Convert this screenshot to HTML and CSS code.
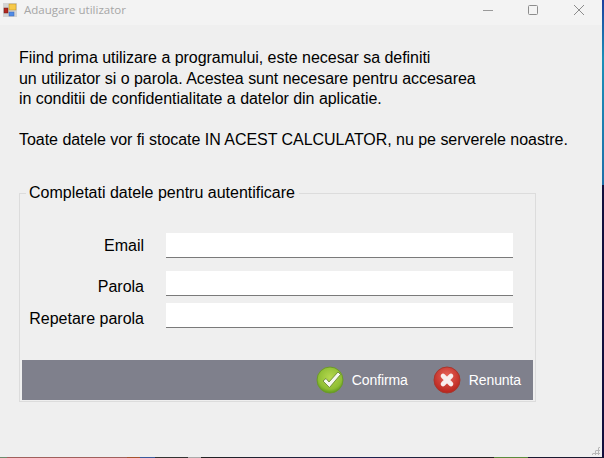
FILE: index.html
```html
<!DOCTYPE html>
<html lang="ro">
<head>
  <meta charset="UTF-8" />
  <title>Adaugare utilizator</title>
  <link rel="stylesheet" href="styles.css">
</head>
<body>
  <div class="window">
    <div class="title-bar">
      <svg class="app-icon" width="14" height="14" viewBox="0 0 14 14">
        <rect x="0" y="0" width="14" height="14" fill="#d4d4d4"/>
        <rect x="1" y="5" width="4" height="5" fill="#b3261e" stroke="#6b1a14" stroke-width="0.5"/>
        <rect x="6" y="1" width="7" height="6" fill="#f7c948" stroke="#b98c25" stroke-width="0.5"/>
        <rect x="6" y="9" width="5" height="4" fill="#4f8be8" stroke="#3c66ad" stroke-width="0.5"/>
      </svg>
      <span class="title-text">Adaugare utilizator</span>
      <div class="window-buttons">
        <svg width="10" height="10" viewBox="0 0 10 10"><path d="M0 5.5H10" stroke="#9a9a9a" fill="none"/></svg>
        <svg class="max-btn" width="10" height="10" viewBox="0 0 10 10"><rect x="0.5" y="0.5" width="9" height="9" rx="1" stroke="#8c8c8c" fill="none"/></svg>
        <svg width="10" height="10" viewBox="0 0 10 10"><path d="M0 0L10 10M10 0L0 10" stroke="#8c8c8c" fill="none"/></svg>
      </div>
    </div>

    <div class="content">
      <p class="intro">Fiind prima utilizare a programului, este necesar sa definiti<br />
        un utilizator si o parola. Acestea sunt necesare pentru accesarea<br />
        in conditii de confidentialitate a datelor din aplicatie.</p>
      <p class="intro note">Toate datele vor fi stocate IN ACEST CALCULATOR, nu pe serverele noastre.</p>

      <div class="login-box">
        <div class="box-title">Completati datele pentru autentificare</div>
        <div class="form-rows">
          <div class="form-row first">
            <label for="email">Email</label>
            <input type="text" id="email" />
          </div>
          <div class="form-row second">
            <label for="parola">Parola</label>
            <input type="password" id="parola" />
          </div>
          <div class="form-row third">
            <label for="repetare">Repetare parola</label>
            <input type="password" id="repetare" />
          </div>
        </div>
        <div class="button-bar">
          <button type="button" class="action confirm">
            <svg width="28" height="28" viewBox="0 0 28 28">
              <defs>
                <radialGradient id="greenBall" cx="50%" cy="40%" r="60%">
                  <stop offset="0" stop-color="#b5d84e"/>
                  <stop offset="0.75" stop-color="#8fbe34"/>
                  <stop offset="1" stop-color="#5f9a1c"/>
                </radialGradient>
              </defs>
              <circle cx="14" cy="14" r="13" fill="url(#greenBall)" stroke="#6c9a2a"/>
              <path d="M7 15L10 12.5L13 16L22 6L24.5 8.5L13.5 21.5Z" fill="#f6f8f0" stroke="#5f7f2c" stroke-width="0.8" stroke-linejoin="round"/>
            </svg>
            Confirma
          </button>
          <button type="button" class="action">
            <svg width="28" height="28" viewBox="0 0 28 28">
              <defs>
                <radialGradient id="redBall" cx="50%" cy="35%" r="65%">
                  <stop offset="0" stop-color="#e8645a"/>
                  <stop offset="1" stop-color="#b8231c"/>
                </radialGradient>
              </defs>
              <circle cx="14" cy="14" r="13" fill="url(#redBall)" stroke="#a8362c"/>
              <path d="M10 10L18 18M18 10L10 18" stroke="#f8eeee" stroke-width="4.6" stroke-linecap="round"/>
            </svg>
            Renunta
          </button>
        </div>
      </div>
    </div>
    <div class="grip"></div>
  </div>
</body>
</html>
```

FILE: styles.css
```css
html, body {
  height: 100%;
}

body {
  margin: 0;
  overflow: hidden;
  background:
    linear-gradient(#1c3f9e, #1a8fb8 30%, #1f6fa8 95%, #120f3d 95%) right top / 2px 195px no-repeat,
    linear-gradient(90deg, #6f8a6c 7px, #a0605c 7px, #a0605c 127px, #a5532f 127px, #a5532f 140px, #3a5a9a 140px, #3a5a9a 155px, #333 155px, #333 188px, #aaa 188px, #aaa 201px, #222 201px, #1c2250 370px, #222 480px, #222 494px, #5a8a3c 494px, #5a8a3c 528px, #1a1a30 528px) left bottom / 100% 1px no-repeat,
    #120f3d;
  font-family: "Liberation Sans", Arial, sans-serif;
}

.window {
  position: relative;
  width: 602px;
  height: 457px;
  background: #efefef;
  color: #000;
}

.title-bar {
  display: flex;
  align-items: center;
  height: 25px;
  padding-bottom: 6px;
  box-sizing: border-box;
  background: #f3f3f3;
}

.app-icon {
  margin-left: 3px;
  margin-right: 7px;
}

.title-text {
  font-family: "Open Sans", "Liberation Sans", sans-serif;
  font-size: 11.5px;
  color: #a6a6a6;
}

.window-buttons {
  display: flex;
  gap: 35px;
  margin-left: auto;
  margin-right: 18px;
}

.max-btn {
  margin-right: 1px;
}

.content {
  padding: 23px 0 0 19px;
}

.intro {
  margin: 0;
  font-size: 16px;
  line-height: 20.5px;
  letter-spacing: -0.035px;
}

.note {
  margin-top: 20px;
}

.login-box {
  display: flex;
  flex-direction: column;
  width: 517px;
  height: 209px;
  box-sizing: border-box;
  margin-top: 43px;
  padding: 0 2px 1px 2px;
  border: 1px solid #dcdcdc;
}

.box-title {
  align-self: flex-start;
  margin: -10px 0 0 4px;
  padding: 0 4px 0 3px;
  font-size: 16px;
  line-height: 18px;
  background: #efefef;
}

.form-rows {
  flex: 1;
  padding-top: 31px;
}

.form-row {
  display: flex;
  height: 25px;
}

.form-row.second {
  margin-top: 13px;
}

.form-row.third {
  margin-top: 7px;
}

.form-row label {
  width: 122px;
  text-align: right;
  font-size: 16px;
  line-height: 25px;
}

.form-row.second label,
.form-row.third label {
  padding-top: 3px;
}

.form-row input {
  width: 347px;
  height: 25px;
  box-sizing: border-box;
  margin: 0 0 0 22px;
  border: none;
  border-bottom: 1px solid #7a7a7a;
  background: #fff;
  outline: none;
}

.button-bar {
  display: flex;
  align-items: center;
  justify-content: flex-end;
  gap: 25px;
  height: 40px;
  padding-right: 12px;
  background: #7f808c;
}

.action {
  display: flex;
  align-items: center;
  gap: 8px;
  padding: 0;
  border: none;
  background: none;
  color: #fff;
  font-family: "Liberation Sans", Arial, sans-serif;
  font-size: 14px;
  letter-spacing: -0.1px;
}

.grip {
  position: absolute;
  right: 2px;
  bottom: 2px;
  width: 9px;
  height: 9px;
  background: radial-gradient(circle, #b8b8b8 1px, transparent 1.2px) 0 0 / 3px 3px;
  clip-path: polygon(100% 0, 100% 100%, 0 100%);
}
```
